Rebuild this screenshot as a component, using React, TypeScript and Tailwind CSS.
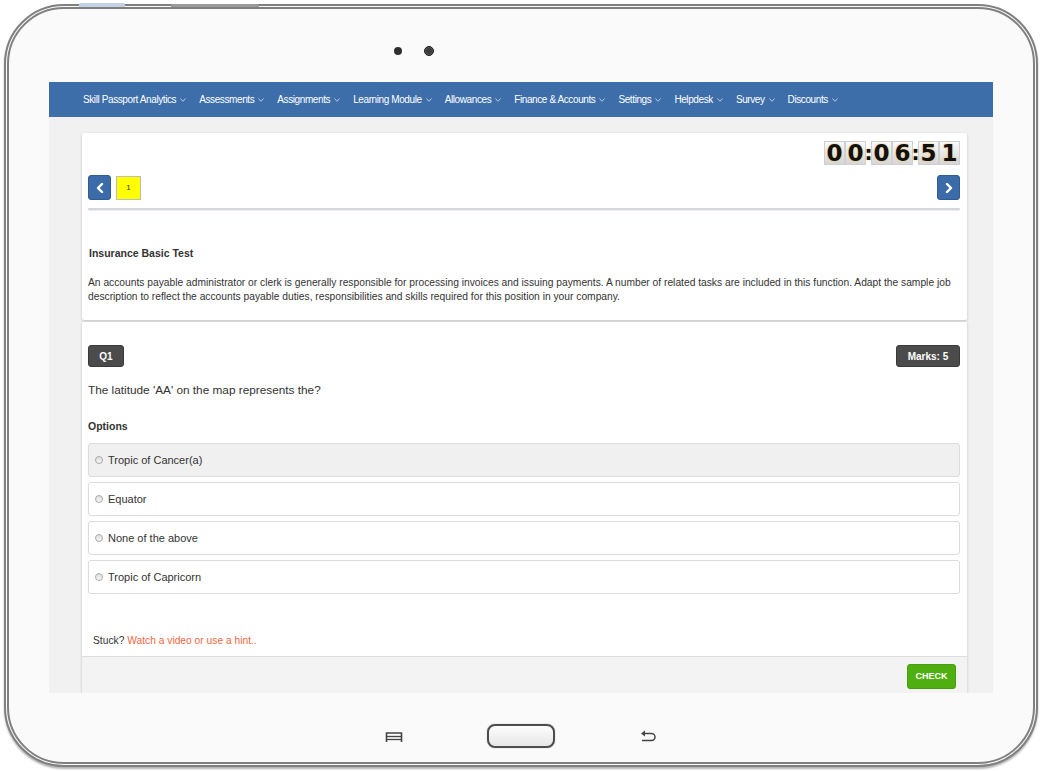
import React from 'react';

const navItems = [
  'Skill Passport Analytics',
  'Assessments',
  'Assignments',
  'Learning Module',
  'Allowances',
  'Finance & Accounts',
  'Settings',
  'Helpdesk',
  'Survey',
  'Discounts',
];

const options = ['Tropic of Cancer(a)', 'Equator', 'None of the above', 'Tropic of Capricorn'];

const sans = 'font-["Liberation_Sans",Arial,sans-serif]';

function Chevron() {
  return (
    <svg width="6" height="4" viewBox="0 0 6 4" className="ml-[4px] opacity-70">
      <polyline points="0.5,0.5 3,3.3 5.5,0.5" fill="none" stroke="white" strokeWidth="0.9" />
    </svg>
  );
}

function ArrowButton({ dir }: { dir: 'left' | 'right' }) {
  return (
    <button className="w-[23px] h-[25px] rounded-[3px] bg-[#3b6ba8] border border-[#2f5c94] flex items-center justify-center">
      <svg width="8" height="10" viewBox="0 0 8 10">
        <polyline
          points={dir === 'left' ? '6,1 2,5 6,9' : '2,1 6,5 2,9'}
          fill="none"
          stroke="white"
          strokeWidth="2.4"
          strokeLinecap="round"
          strokeLinejoin="round"
        />
      </svg>
    </button>
  );
}

function Digit({ d }: { d: string }) {
  return (
    <div className="w-[21px] h-[24px] border border-[#cfcfcf] bg-linear-to-b from-[#fafafa] to-[#d6d6d6] flex items-center justify-center text-[23px] font-bold leading-none text-[#111] font-['DejaVu_Sans',sans-serif] [text-shadow:0_0_2px_#f2b552]">
      {d}
    </div>
  );
}

function Colon() {
  return (
    <div className="w-[5px] h-[24px] flex items-center justify-center text-[20px] font-bold leading-none text-[#111] font-['DejaVu_Sans',sans-serif] [text-shadow:0_0_2px_#f2b552]">
      :
    </div>
  );
}

export default function App() {
  return (
    <div className="w-[1045px] h-[771px] bg-white pt-[4px] pl-[4px] overflow-hidden">
      <div className="relative w-[1034px] h-[763px] rounded-[60px] border-[5px] border-double border-[#808080] bg-[#fafafa] shadow-[0_2px_2px_rgba(0,0,0,0.3)] flex flex-col">
        <div className="absolute left-[70px] top-[-6px] w-[46px] h-[4px] rounded-t-[2px] bg-[#c3d2e2]" />
        <div className="absolute left-[162px] top-[-5px] w-[88px] h-[3px] rounded-t-[2px] bg-[#9a9a9a]" />

        {/* camera */}
        <div className="h-[73px] flex items-start pt-[37px] pl-[385px] gap-[22px]">
          <div className="w-[8px] h-[8px] mt-[1px] rounded-full bg-[#2f2f2f]" />
          <div className="w-[10px] h-[10px] rounded-full bg-[#3a3a3a] border border-[#1c1c1c] shadow-[inset_0_0_2px_#888]" />
        </div>

        {/* screen */}
        <div className={`ml-[40px] w-[944px] h-[611px] bg-[#f1f1f1] overflow-hidden flex flex-col ${sans} text-[#333]`}>
          <nav className="h-[35px] shrink-0 bg-[#3d6eaa] flex items-center pl-[34px] gap-[13px] text-white text-[10px] tracking-[-0.4px]">
            {navItems.map((item) => (
              <div key={item} className="flex items-center whitespace-nowrap">
                <span>{item}</span>
                <Chevron />
              </div>
            ))}
          </nav>

          <div className="pt-[16px] pl-[33px] pr-[26px] flex flex-col">
            {/* test header card */}
            <div className="bg-white rounded-[2px] shadow-[0_1px_3px_rgba(0,0,0,0.2)] px-[6px] pr-[7px] pt-[8px] pb-[16px]">
              <div className="flex justify-end">
                <div className="flex">
                  <Digit d="0" />
                  <Digit d="0" />
                  <Colon />
                  <Digit d="0" />
                  <Digit d="6" />
                  <Colon />
                  <Digit d="5" />
                  <Digit d="1" />
                </div>
              </div>
              <div className="mt-[10px] flex items-center justify-between">
                <div className="flex items-center gap-[5px]">
                  <ArrowButton dir="left" />
                  <div className="w-[25px] h-[24px] bg-[#ffff00] border border-[#bdbdbd] flex items-center justify-center text-[8px]">
                    1
                  </div>
                </div>
                <ArrowButton dir="right" />
              </div>
              <div className="mt-[8px] h-[2px] bg-[#d3d8de] rounded-full shadow-[0_1px_1px_rgba(0,0,0,0.08)]" />
              <h1 className="mt-[36px] text-[10.5px] leading-[14px] font-bold pl-[1px]">Insurance Basic Test</h1>
              <p className="mt-[16px] pr-[2px] text-[10.25px] leading-[14px] -mr-[4px]">
                An accounts payable administrator or clerk is generally responsible for processing invoices and issuing
                payments. A number of related tasks are included in this function. Adapt the sample job description to
                reflect the accounts payable duties, responsibilities and skills required for this position in your
                company.
              </p>
            </div>

            {/* question card */}
            <div className="mt-[2px] bg-white rounded-[2px] shadow-[0_1px_3px_rgba(0,0,0,0.2)] flex flex-col">
              <div className="px-[6px] pr-[7px] pt-[23px] pb-[8px]">
                <div className="flex justify-between">
                  <span className="w-[36px] h-[22px] rounded-[3px] bg-[#4b4b4b] border border-[#3a3a3a] text-white text-[10px] font-bold flex items-center justify-center">
                    Q1
                  </span>
                  <span className="w-[64px] h-[22px] rounded-[3px] bg-[#4b4b4b] border border-[#3a3a3a] text-white text-[10px] font-bold flex items-center justify-center">
                    Marks: 5
                  </span>
                </div>
                <p className="mt-[15px] text-[11.8px] leading-[16px]">The latitude 'AA' on the map represents the?</p>
                <p className="mt-[21px] text-[10.5px] leading-[14px] font-bold">Options</p>
                <div className="mt-[10px] flex flex-col gap-[5px]">
                  {options.map((opt, i) => (
                    <label
                      key={opt}
                      className={`h-[34px] rounded-[3px] border border-[#dcdcdc] flex items-center pl-[6px] gap-[5px] text-[11px] ${
                        i === 0 ? 'bg-[#f0f0f0]' : 'bg-white'
                      }`}
                    >
                      <span className="w-[8px] h-[8px] rounded-full border border-[#a9a9a9] bg-linear-to-b from-[#dedede] to-[#f7f7f7]" />
                      {opt}
                    </label>
                  ))}
                </div>
                <p className="mt-[40px] pl-[5px] text-[10.25px] leading-[14px]">
                  Stuck? <span className="text-[#f2673f]">Watch a video or use a hint..</span>
                </p>
              </div>
              <div className="border-t border-[#dddddd] bg-[#f3f3f3] h-[50px] flex justify-end pt-[7px] pr-[11px]">
                <button className="w-[49px] h-[25px] rounded-[3px] bg-[#4fae10] border border-[#47a00c] text-white text-[9px] font-bold">
                  CHECK
                </button>
              </div>
            </div>
          </div>
        </div>

        {/* hardware buttons */}
        <div className="flex-1 flex items-start pt-[31px] pl-[376px]">
          <svg width="18" height="10" viewBox="0 0 18 10" className="mt-[8px]">
            <path d="M1.5 10 V1 H16.5 V10" fill="none" stroke="#444" strokeWidth="1.6" />
            <line x1="1.5" y1="4.5" x2="16.5" y2="4.5" stroke="#444" strokeWidth="1.3" />
            <line x1="1.5" y1="7.5" x2="16.5" y2="7.5" stroke="#444" strokeWidth="1.3" />
          </svg>
          <div className="ml-[84px] w-[68px] h-[24px] rounded-[8px] border-[2px] border-[#4d4d4d] bg-linear-to-b from-[#fdfdfd] to-[#e6e6e6] shadow-[0_0_1px_rgba(0,0,0,0.5)]" />
          <svg width="18" height="13" viewBox="0 0 18 13" className="ml-[84px] mt-[6px]">
            <path d="M4 3.5 H12.5 A3.5 3.5 0 0 1 12.5 10.5 H3" fill="none" stroke="#444" strokeWidth="1.5" />
            <path d="M6 0.5 L2 3.5 L6 6.5 Z" fill="#444" />
          </svg>
        </div>
      </div>
    </div>
  );
}
